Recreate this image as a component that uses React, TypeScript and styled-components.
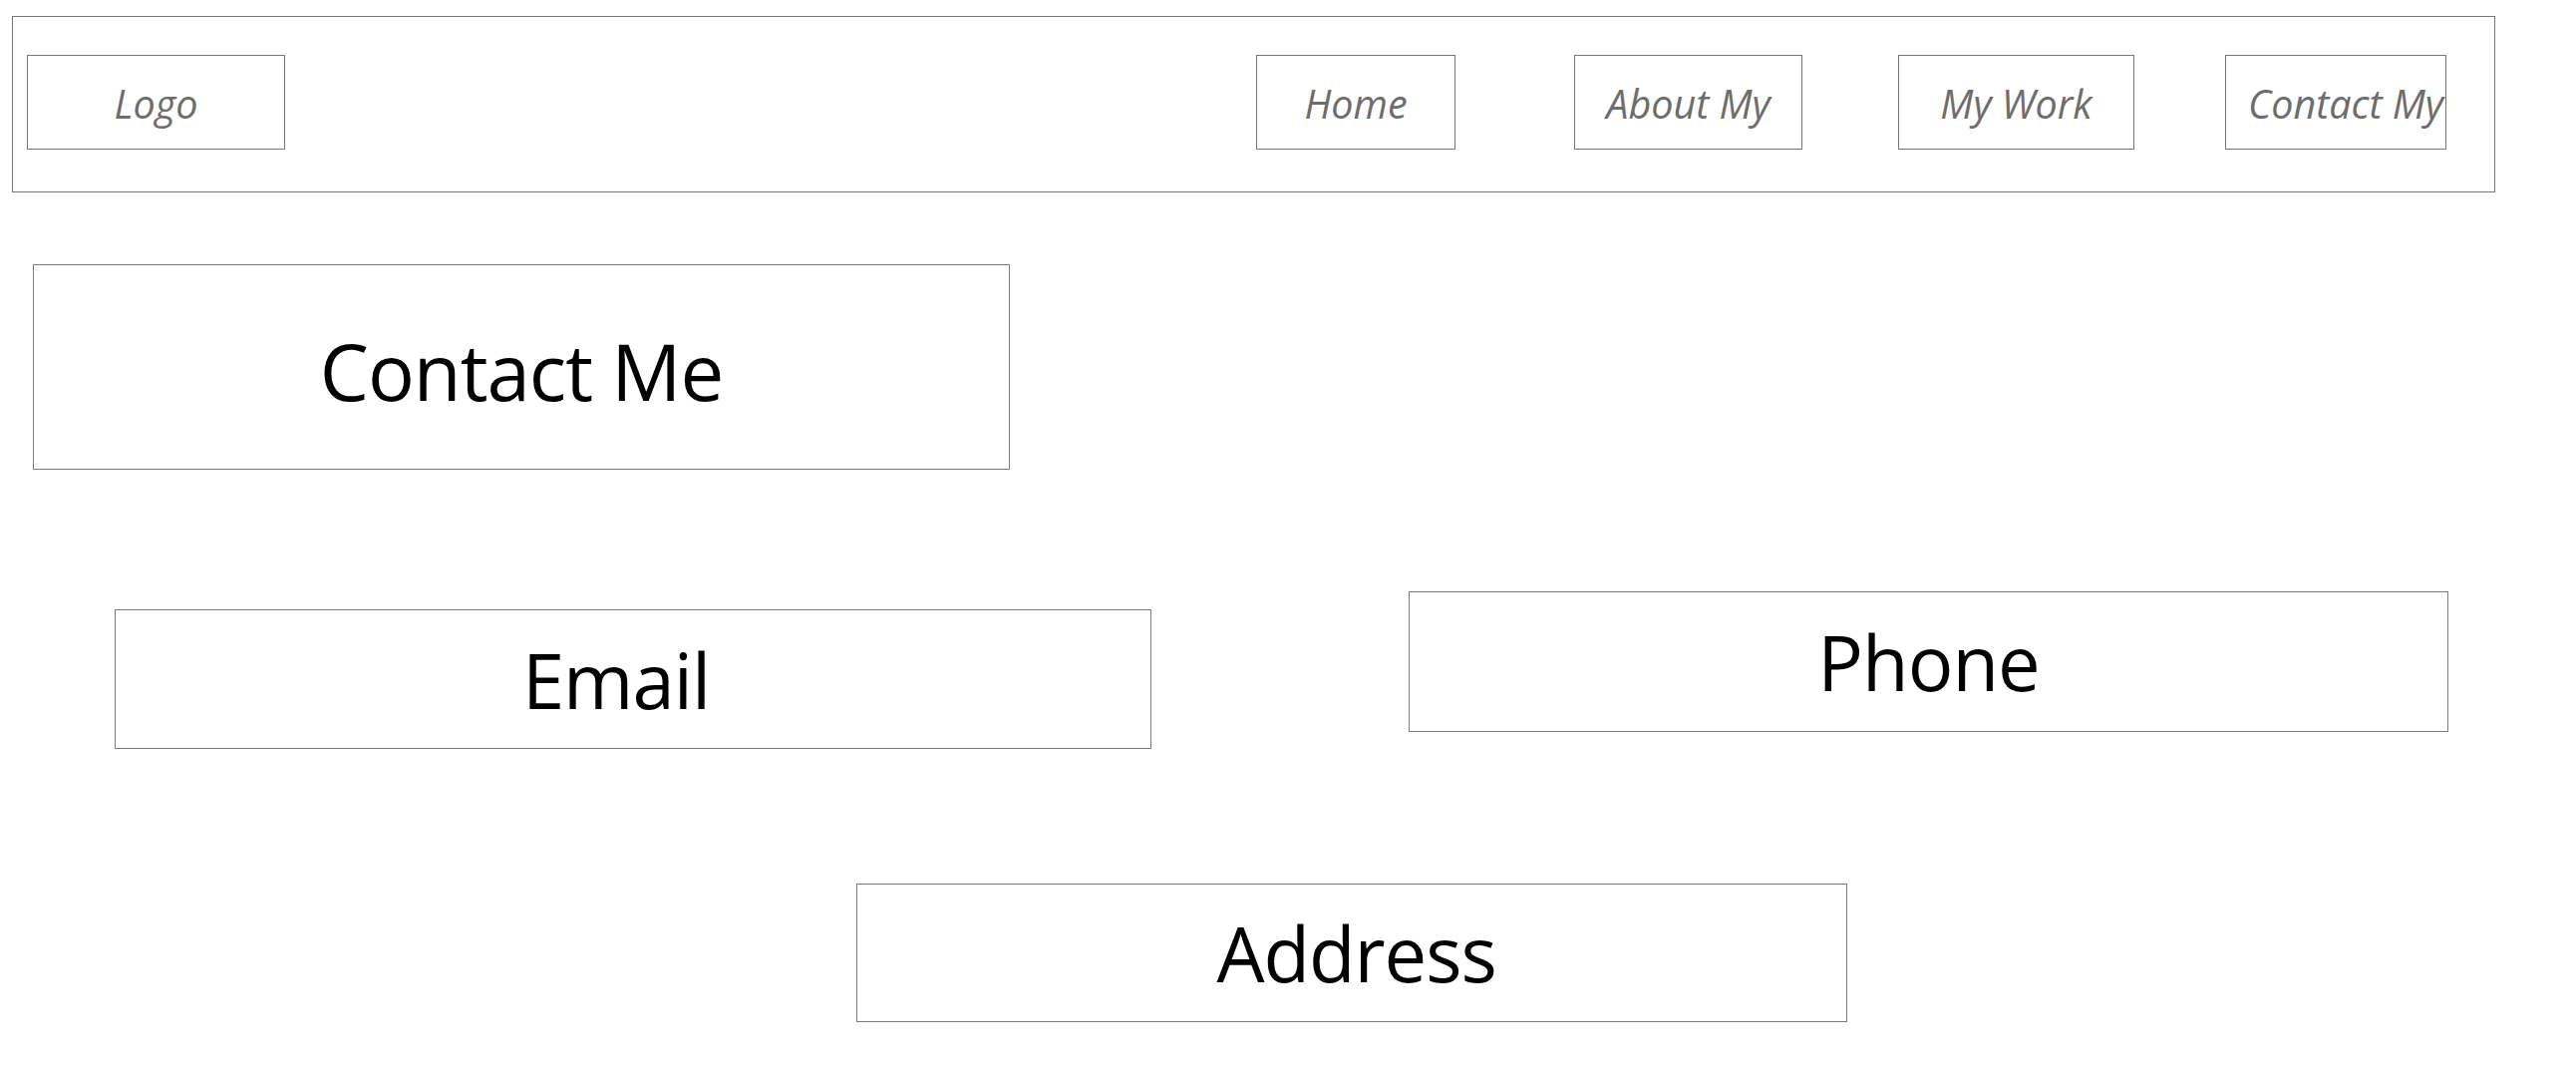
import React from 'react';
import styled, { createGlobalStyle } from 'styled-components';

const GlobalStyle = createGlobalStyle`
  html, body {
    margin: 0;
    padding: 0;
    background: #fff;
  }
  body {
    font-family: "Open Sans", "Noto Sans", "Liberation Sans", sans-serif;
  }
`;

const Page = styled.div`
  width: 2584px;
  height: 1080px;
  padding-top: 16px;
  box-sizing: border-box;
  overflow: hidden;
`;

const Header = styled.header`
  display: flex;
  align-items: flex-start;
  justify-content: space-between;
  margin-left: 12px;
  width: 2491px;
  height: 177px;
  box-sizing: border-box;
  border: 1px solid #767676;
  padding: 38px 48px 0 14px;
`;

const Nav = styled.nav`
  display: flex;
`;

const Tab = styled.div<{ $w: number; $ml?: number; $clip?: boolean }>`
  width: ${p => p.$w}px;
  height: 95px;
  margin-left: ${p => p.$ml ?? 0}px;
  box-sizing: border-box;
  border: 1px solid #767676;
  display: flex;
  align-items: center;
  justify-content: ${p => (p.$clip ? 'flex-start' : 'center')};
  padding: 2px 22px 0;
  overflow: hidden;
  white-space: nowrap;
  font-style: italic;
  font-size: 39.5px;
  color: #6d6d6d;
  > span {
    flex-shrink: 0;
  }
`;

const Boxed = styled.div<{ $w: number; $h: number; $size?: number; $padL?: number; $padR?: number }>`
  width: ${p => p.$w}px;
  height: ${p => p.$h}px;
  box-sizing: border-box;
  border: 1px solid #7c7c7c;
  display: flex;
  align-items: center;
  justify-content: center;
  padding-left: ${p => p.$padL ?? 0}px;
  padding-right: ${p => p.$padR ?? 0}px;
  font-size: ${p => p.$size ?? 76}px;
  color: #000;
  letter-spacing: -1px;
`;

const Title = styled(Boxed)`
  margin: 72px 0 0 33px;
  padding-top: 8px;
`;

const Row = styled.div`
  display: flex;
  align-items: flex-start;
  margin-top: 122px;
  padding-left: 115px;
  gap: 258px;
`;

const Field = styled(Boxed)<{ $top?: number }>`
  margin-top: ${p => p.$top ?? 0}px;
`;

const Bottom = styled.div`
  margin-top: 135px;
  padding-left: 859px;
`;

export default function App() {
  return (
    <Page>
      <GlobalStyle />
      <Header>
        <Tab $w={259}><span>Logo</span></Tab>
        <Nav>
          <Tab $w={200}><span>Home</span></Tab>
          <Tab $w={229} $ml={119}><span>About My</span></Tab>
          <Tab $w={237} $ml={96}><span>My Work</span></Tab>
          <Tab $w={222} $ml={91} $clip><span>Contact My</span></Tab>
        </Nav>
      </Header>
      <Title $w={980} $h={206} $size={78}>Contact Me</Title>
      <Row>
        <Field $w={1040} $h={140} $top={18} $padR={34}>Email</Field>
        <Field $w={1043} $h={141}>Phone</Field>
      </Row>
      <Bottom>
        <Field $w={994} $h={139} $padL={9}>Address</Field>
      </Bottom>
    </Page>
  );
}
